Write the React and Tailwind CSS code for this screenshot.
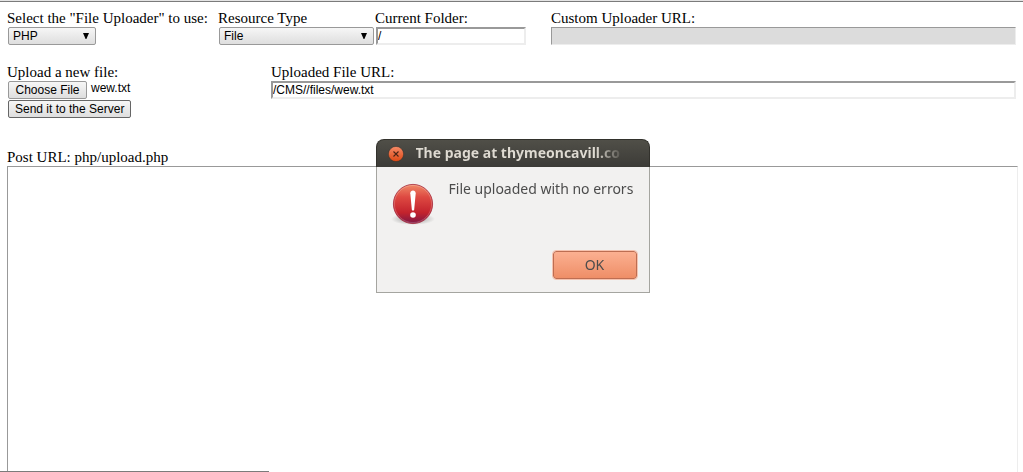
import { useRef, useState } from "react";

const control = "h-[18px] text-xs leading-[14px] font-['Liberation_Sans',Arial,sans-serif] text-black";
const raised = "rounded-[2px] border bg-linear-to-b from-[#f6f6f6] to-[#dedede]";
const field = "block border-2 border-t-[#999] border-l-[#999] border-r-[#ededed] border-b-[#ededed] bg-white";

function Picker({ id, label, options, width }) {
  return (
    <div>
      <label htmlFor={id} className="block whitespace-nowrap">{label}</label>
      <div className={`relative ml-px ${width}`}>
        <select id={id} className={`${control} ${raised} block w-full appearance-none border-[#999] pl-1`}>
          {options.map((option) => <option key={option}>{option}</option>)}
        </select>
        <svg className="pointer-events-none absolute top-1.5 right-1.5 h-1.5 w-2" viewBox="0 0 8 6" aria-hidden="true">
          <path d="M1 0h6L4.4 6h-.8z" fill="#000" />
        </svg>
      </div>
    </div>
  );
}

function AlertIcon() {
  return (
    <svg className="h-12 w-12 shrink-0" viewBox="0 0 48 48" aria-hidden="true">
      <defs>
        <linearGradient id="ball" x1="0" y1="0" x2="0" y2="1">
          <stop offset="0" stopColor="#f08a68" />
          <stop offset=".32" stopColor="#de4a42" />
          <stop offset=".72" stopColor="#c3232d" />
          <stop offset="1" stopColor="#7d1745" />
        </linearGradient>
        <radialGradient id="shade">
          <stop offset="0" stopColor="#000" stopOpacity=".4" />
          <stop offset="1" stopColor="#000" stopOpacity="0" />
        </radialGradient>
      </defs>
      <ellipse cx="24" cy="40" rx="22" ry="6" fill="url(#shade)" />
      <circle cx="24" cy="25" r="19.6" fill="url(#ball)" stroke="#a5283a" strokeWidth=".8" />
      <circle cx="24" cy="25" r="18.6" fill="none" stroke="#fff" strokeOpacity=".2" />
      <path d="M21.3 14.3c0-3.8 5.4-3.8 5.4 0L25.2 30.4c-.2 1.6-2.2 1.6-2.4 0z" fill="#fff" />
      <circle cx="24" cy="36" r="2.8" fill="#fff" />
    </svg>
  );
}

function UploadAlert({ onClose }) {
  return (
    <div
      role="alertdialog"
      aria-labelledby="alert-title"
      aria-describedby="alert-text"
      className="fixed top-[139px] left-1/2 ml-[-136px] w-[274px] font-['Noto_Sans','Open_Sans',sans-serif] text-sm text-[#4c4c4c]"
    >
      <header className="flex h-7 items-center gap-3 rounded-t-lg border border-b-0 border-[#32312c] bg-linear-to-b from-[#504f48] to-[#3c3b37] pr-6 pl-[11px]">
        <button type="button" aria-label="Close" onClick={onClose} className="h-4 w-4 shrink-0">
          <svg className="h-4 w-4" viewBox="0 0 16 16" aria-hidden="true">
            <defs>
              <linearGradient id="close" x1="0" y1="0" x2="0" y2="1">
                <stop offset="0" stopColor="#f58b68" />
                <stop offset="1" stopColor="#dd4814" />
              </linearGradient>
            </defs>
            <circle cx="8" cy="8" r="7.6" fill="url(#close)" stroke="#33302b" strokeWidth=".5" />
            <path d="M5.5 5.5l5 5m0-5l-5 5" stroke="#4a2416" strokeWidth="1.1" />
          </svg>
        </button>
        <h1 id="alert-title" className="overflow-hidden bg-linear-to-r from-[#dfdbd2] from-88% to-[#5c5a54] bg-clip-text pb-0.5 font-['Noto_Sans','Open_Sans',sans-serif] font-bold whitespace-nowrap text-transparent">
          The page at thymeoncavill.co
        </h1>
      </header>
      <div className="border border-t-0 border-[#a5a5a0] bg-[#f2f1f0] px-3 pt-3 pb-[13px]">
        <div className="flex min-h-[72px] gap-3">
          <AlertIcon />
          <p id="alert-text" className="whitespace-nowrap">File uploaded with no errors</p>
        </div>
        <div className="flex justify-end">
          <button
            type="button"
            onClick={onClose}
            className="h-7 w-[84px] rounded-[3px] border border-[#bd6e52] bg-linear-to-b from-[#fbb091] to-[#ee8e67] outline outline-[#f5c3b0]"
          >
            OK
          </button>
        </div>
      </div>
    </div>
  );
}

export default function App() {
  const picker = useRef(null);
  const [fileName, setFileName] = useState("wew.txt");
  const [alertOpen, setAlertOpen] = useState(true);

  return (
    <div className="flex min-h-screen flex-col border-t border-[#e4e4e4] bg-white font-['Liberation_Serif','Times_New_Roman',serif] text-[15px] leading-[18px] text-black">
      <form className="flex flex-col gap-[18px] border-t border-[#7b7b7b] px-[7px] pt-[7px]" onSubmit={(event) => event.preventDefault()}>
        <div className="grid grid-cols-[211px_157px_176px_1fr]">
          <Picker id="uploader" label={'Select the "File Uploader" to use:'} options={["PHP", "ASP", "Perl"]} width="w-[88px]" />
          <Picker id="resource" label="Resource Type" options={["File", "Image", "Media"]} width="w-[155px]" />
          <div>
            <label htmlFor="folder" className="block">Current Folder:</label>
            <input id="folder" type="text" defaultValue="/" className={`${control} ${field} ml-px w-[150px]`} />
          </div>
          <div>
            <label htmlFor="custom-url" className="block">Custom Uploader URL:</label>
            <input id="custom-url" type="text" disabled className={`${control} block w-full border border-t-[#999] border-l-[#999] border-r-[#ededed] border-b-[#ededed] bg-[#dcdcdc]`} />
          </div>
        </div>
        <div className="grid grid-cols-[264px_1fr]">
          <div>
            <label htmlFor="new-file" className="block">Upload a new file:</label>
            <div className="ml-px flex flex-col items-start gap-px">
              <div className="flex gap-1">
                <button type="button" onClick={() => picker.current.click()} className={`${control} ${raised} w-[79px] border-[#999]`}>
                  Choose File
                </button>
                <span className={control}>{fileName}</span>
                <input
                  id="new-file"
                  ref={picker}
                  type="file"
                  className="hidden"
                  onChange={(event) => setFileName(event.target.files[0]?.name ?? "")}
                />
              </div>
              <button type="submit" onClick={() => setAlertOpen(true)} className={`${control} ${raised} border-[#666] px-1.5`}>
                Send it to the Server
              </button>
            </div>
          </div>
          <div>
            <label htmlFor="file-url" className="block">Uploaded File URL:</label>
            <input id="file-url" type="text" defaultValue="/CMS//files/wew.txt" className={`${control} ${field} w-full`} />
          </div>
        </div>
      </form>
      <p className="px-[7px] pt-[31px] leading-[17px]">Post URL: php/upload.php</p>
      <section aria-label="Server response" className="mr-[5px] ml-[7px] flex-1 border border-b-0 border-t-[#999] border-r-[#ededed] border-l-[#999]" />
      <div className="fixed bottom-0 left-0 h-px w-[269px] bg-[#7b7b7b]" />
      {alertOpen && <UploadAlert onClose={() => setAlertOpen(false)} />}
    </div>
  );
}
